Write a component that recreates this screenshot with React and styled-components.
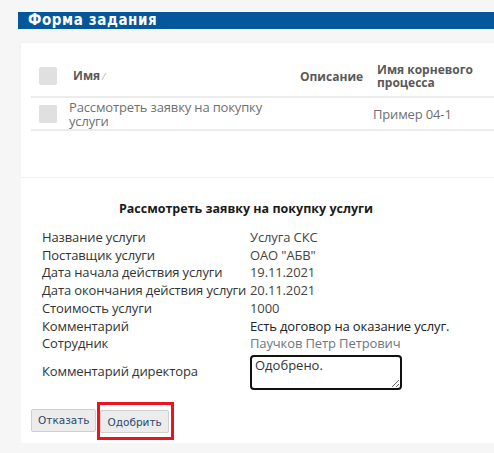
import React from 'react'
import styled, { createGlobalStyle } from 'styled-components'

const GlobalStyle = createGlobalStyle`
  html, body {
    margin: 0;
    padding: 0;
    background: #f6f6f6;
    font-family: "Open Sans", "Noto Sans", sans-serif;
    overflow: hidden;
  }
`

const fields = [
  { label: 'Название услуги', value: 'Услуга СКС' },
  { label: 'Поставщик услуги', value: 'ОАО "АБВ"' },
  { label: 'Дата начала действия услуги', value: '19.11.2021' },
  { label: 'Дата окончания действия услуги', value: '20.11.2021' },
  { label: 'Стоимость услуги', value: '1000' },
  { label: 'Комментарий', value: 'Есть договор на оказание услуг.', strong: true },
  { label: 'Сотрудник', value: 'Паучков Петр Петрович', muted: true },
]

export default function App() {
  return (
    <Page>
      <GlobalStyle />
      <TitleBar>Форма задания</TitleBar>
      <Cards>
        <Card>
          <Table>
            <HeadRow>
              <Cell><Check /></Cell>
              <HeadCell $indent>Имя <Sort>⁄</Sort></HeadCell>
              <HeadCell>Описание</HeadCell>
              <HeadCell $indent>Имя корневого процесса</HeadCell>
            </HeadRow>
            <BodyRow>
              <Cell><Check /></Cell>
              <TextCell>Рассмотреть заявку на покупку услуги</TextCell>
              <TextCell />
              <TextCell>Пример 04-1</TextCell>
            </BodyRow>
          </Table>
        </Card>
        <FormCard>
          <Heading>Рассмотреть заявку на покупку услуги</Heading>
          <Fields>
            {fields.map(f => (
              <React.Fragment key={f.label}>
                <Label>{f.label}</Label>
                <Value $strong={f.strong} $muted={f.muted}>{f.value}</Value>
              </React.Fragment>
            ))}
            <Label $center>Комментарий директора</Label>
            <Value>
              <Comment defaultValue="Одобрено." />
            </Value>
          </Fields>
          <Actions>
            <Button>Отказать</Button>
            <Marked>
              <Button>Одобрить</Button>
            </Marked>
          </Actions>
        </FormCard>
      </Cards>
    </Page>
  )
}

const Page = styled.div`
  padding: 12px 0 0 18px;
  width: 476px;
`

const TitleBar = styled.div`
  height: 17px;
  line-height: 17px;
  background: #03579a;
  color: #fff;
  font-family: "DejaVu Sans Condensed", "DejaVu Sans", sans-serif;
  font-stretch: condensed;
  font-weight: bold;
  font-size: 15px;
  letter-spacing: 0.6px;
  padding-left: 10px;
`

const Cards = styled.div`
  padding: 14px 0 0 3px;
  display: flex;
  flex-direction: column;
`

const Card = styled.div`
  background: #fff;
  height: 134px;
  width: 473px;
  box-shadow: 0 0 4px rgba(0, 0, 0, 0.04);
  padding: 13px 0 0 10px;
  box-sizing: border-box;
`

const Table = styled.div`
  display: flex;
  flex-direction: column;
`

const HeadRow = styled.div`
  display: grid;
  grid-template-columns: 38px 231px 73px 1fr;
  align-items: center;
  height: 40px;
  border-bottom: 2px solid #ececec;
`

const BodyRow = styled(HeadRow)`
  height: 31px;
`

const Cell = styled.div`
  padding-left: 8px;
  display: flex;
  align-items: center;
`

const Check = styled.span`
  display: block;
  width: 18px;
  height: 18px;
  border-radius: 2px;
  background: #e0e0e0;
`

const HeadCell = styled.div`
  font-weight: bold;
  font-size: 12px;
  line-height: 13px;
  color: #595959;
  padding-left: ${p => (p.$indent ? '4px' : '0')};
  padding-right: 20px;
`

const Sort = styled.span`
  font-weight: normal;
  color: #999;
  font-size: 9px;
`

const TextCell = styled.div`
  font-size: 13px;
  line-height: 14px;
  color: #707070;
  letter-spacing: -0.15px;
  padding-right: 12px;
`

const FormCard = styled.div`
  margin-top: 1px;
  background: #fff;
  width: 480px;
  padding: 22px 0 10px 10px;
  box-sizing: border-box;
`

const Heading = styled.div`
  font-weight: bold;
  font-size: 12.5px;
  color: #1a1a1a;
  text-align: center;
  width: 430px;
  margin-bottom: 12px;
`

const Fields = styled.div`
  display: grid;
  grid-template-columns: 208px 1fr;
  padding-left: 11px;
  font-size: 13px;
  line-height: 17.7px;
  letter-spacing: -0.12px;
`

const Label = styled.div`
  color: #333;
  align-self: ${p => (p.$center ? 'center' : 'start')};
`

const Value = styled.div`
  color: ${p => (p.$muted ? '#6b7785' : p.$strong ? '#222' : '#444')};
`

const Comment = styled.textarea`
  display: block;
  margin-top: 2px;
  width: 152px;
  height: 35px;
  box-sizing: border-box;
  border: 2px solid #111;
  border-radius: 4px;
  padding: 0 3px;
  font-family: "Open Sans", "Noto Sans", sans-serif;
  font-size: 13px;
  line-height: 16px;
  color: #333;
  resize: both;
`

const Actions = styled.div`
  display: flex;
  gap: 4px;
  margin-top: 19px;
`

const Button = styled.button`
  margin: 0;
  height: 23px;
  padding: 0 6px;
  background: #ececec;
  border: 1px solid #cfcfcf;
  border-radius: 2px;
  font-family: "DejaVu Sans", Verdana, sans-serif;
  font-size: 10.5px;
  color: #2b4a6c;
`

const Marked = styled.div`
  position: relative;
  &::after {
    content: '';
    position: absolute;
    left: -3px;
    right: -5px;
    top: -7px;
    bottom: -7px;
    border: 3px solid #e8141f;
  }
`
